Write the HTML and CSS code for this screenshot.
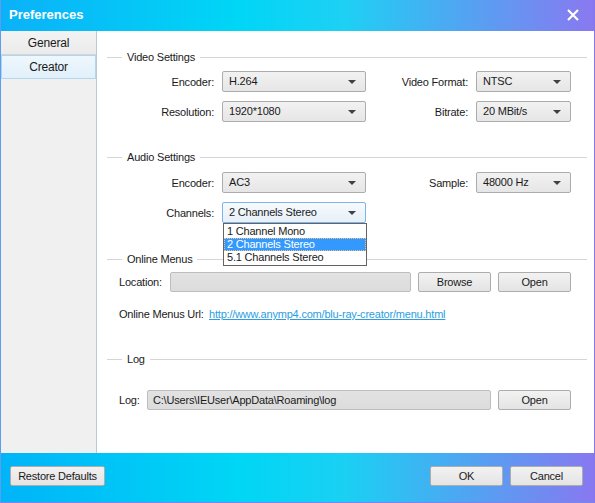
FILE: index.html
```html
<!DOCTYPE html>
<html lang="en">
<head>
    <meta charset="UTF-8">
    <title>Preferences</title>
    <link rel="stylesheet" href="styles.css">
</head>
<body>
    <div class="window">
        <div class="titlebar">
            <span class="title">Preferences</span>
            <svg class="close" width="12" height="12" viewBox="0 0 12 12">
                <path d="M1 1 L11 11 M11 1 L1 11" stroke="#ffffff" stroke-width="2.2" fill="none"/>
            </svg>
        </div>

        <div class="main">
            <div class="sidebar">
                <div class="tab">General</div>
                <div class="tab active">Creator</div>
            </div>

            <div class="content">
                <!-- Video -->
                <div class="group-title"><span>Video Settings</span></div>
                <div class="form-grid">
                    <label>Encoder:</label>
                    <div class="select">H.264</div>
                    <label>Video Format:</label>
                    <div class="select">NTSC</div>

                    <label>Resolution:</label>
                    <div class="select">1920*1080</div>
                    <label>Bitrate:</label>
                    <div class="select">20 MBit/s</div>
                </div>

                <!-- Audio -->
                <div class="group-title audio"><span>Audio Settings</span></div>
                <div class="form-grid">
                    <label>Encoder:</label>
                    <div class="select">AC3</div>
                    <label>Sample:</label>
                    <div class="select">48000 Hz</div>

                    <label>Channels:</label>
                    <div class="select focused">2 Channels Stereo
                        <ul class="dropdown">
                            <li>1 Channel Mono</li>
                            <li class="selected">2 Channels Stereo</li>
                            <li>5.1 Channels Stereo</li>
                        </ul>
                    </div>
                </div>

                <!-- Online menus -->
                <div class="group-title online"><span>Online Menus</span></div>
                <div class="row">
                    <label class="w-location">Location:</label>
                    <div class="input location"></div>
                    <button class="btn">Browse</button>
                    <button class="btn">Open</button>
                </div>
                <div class="row url-row">
                    <label class="w-url">Online Menus Url:</label>
                    <a class="link" href="#">http://www.anymp4.com/blu-ray-creator/menu.html</a>
                </div>

                <!-- Log -->
                <div class="group-title log"><span>Log</span></div>
                <div class="row log-row">
                    <label class="w-log">Log:</label>
                    <div class="input path">C:\Users\IEUser\AppData\Roaming\log</div>
                    <button class="btn">Open</button>
                </div>
            </div>
        </div>

        <div class="footer">
            <button class="btn restore">Restore Defaults</button>
            <div class="footer-right">
                <button class="btn">OK</button>
                <button class="btn">Cancel</button>
            </div>
        </div>
    </div>
</body>
</html>
```

FILE: styles.css
```css
body {
    margin: 0;
    font-family: "Liberation Sans", Arial, sans-serif;
    font-size: 11px;
    letter-spacing: -0.2px;
    color: #1a1a1a;
    background: #ffffff;
}
.window {
    width: 595px;
    height: 503px;
    box-sizing: border-box;
    display: flex;
    flex-direction: column;
    border-left: 1px solid #5d9cf0;
    border-right: 1px solid #8676ee;
    border-bottom: 1px solid #7a86ee;
    overflow: hidden;
}
.titlebar {
    height: 31px;
    flex: none;
    display: flex;
    align-items: center;
    justify-content: space-between;
    padding: 0 16px 0 9px;
    margin: 0 -1px;
    background: linear-gradient(90deg, #0bb1f8 0%, #00d6f6 40%, #1ed0f4 58%, #52a4f2 78%, #8a78f0 100%);
}
.title {
    color: #ffffff;
    font-weight: bold;
    font-size: 13px;
    letter-spacing: 0;
    margin-top: -2px;
}
.close {
    margin-top: -2px;
}
.main {
    flex: 1;
    display: flex;
    min-height: 0;
}
.sidebar {
    width: 95px;
    flex: none;
    background: #f0f0f0;
    border-right: 1px solid #bfc6d4;
}
.tab {
    height: 23px;
    line-height: 24px;
    text-align: center;
    font-size: 12px;
    border-bottom: 1px solid #d6d6d6;
    background: linear-gradient(#f3f3f3, #ebebeb);
}
.tab.active {
    background: linear-gradient(#eef7fd, #e1f0fa);
    border: 1px solid #b3d6ef;
    height: 22px;
    line-height: 23px;
}
.content {
    flex: 1;
    background: #ffffff;
    padding: 19px 7px 0 10px;
    position: relative;
}
.group-title {
    display: flex;
    align-items: center;
    height: 14px;
    font-size: 11px;
}
.group-title::before {
    content: "";
    width: 15px;
    border-top: 1px solid #d5d5d5;
}
.group-title::after {
    content: "";
    flex: 1;
    border-top: 1px solid #d5d5d5;
}
.group-title span {
    padding: 0 5px;
}
.group-title.audio {
    margin-top: 28px;
}
.group-title.online {
    margin-top: 29px;
}
.group-title.log {
    margin-top: 31px;
}
.form-grid {
    display: grid;
    grid-template-columns: 115px 144px 110px 95px;
    grid-auto-rows: 21px;
    row-gap: 9px;
    margin-top: 7px;
    align-items: center;
}
.form-grid label {
    text-align: right;
    padding-right: 8px;
}
.audio + .form-grid {
    margin-top: 8px;
}
.select {
    position: relative;
    height: 21px;
    box-sizing: border-box;
    border: 1px solid #acacac;
    border-radius: 2px;
    background: linear-gradient(#f2f2f2, #e6e6e6);
    padding-left: 6px;
    line-height: 19px;
}
.select::after {
    content: "";
    position: absolute;
    right: 9px;
    top: 8px;
    border-left: 4px solid transparent;
    border-right: 4px solid transparent;
    border-top: 4px solid #404040;
}
.select.focused {
    border-color: #7eb4ea;
    background: linear-gradient(#f6fafd, #e6f0f9);
}
.dropdown {
    position: absolute;
    top: 20px;
    left: 0;
    width: 144px;
    box-sizing: border-box;
    margin: 0;
    padding: 1px 0;
    list-style: none;
    background: #ffffff;
    border: 1px solid #646464;
    z-index: 2;
}
.dropdown li {
    height: 13px;
    line-height: 13px;
    padding-left: 3px;
}
.dropdown li.selected {
    background: #3399ff;
    color: #ffffff;
    outline: 1px dotted #f0c080;
    outline-offset: -1px;
}
.row {
    display: flex;
    align-items: center;
    gap: 7px;
    padding-left: 12px;
    height: 20px;
    margin-top: 6px;
}
.row label {
    flex: none;
    white-space: nowrap;
}
.w-location {
    width: 44px;
}
.w-url {
    width: 83px;
}
.w-log {
    width: 21px;
}
.input {
    height: 20px;
    box-sizing: border-box;
    border: 1px solid #bdbdbd;
    border-radius: 2px;
    background: linear-gradient(#e2e2e2, #dcdcdc);
    padding-left: 5px;
    line-height: 18px;
}
.input.location {
    width: 241px;
}
.input.path {
    width: 344px;
}
.url-row {
    margin-top: 15px;
    height: 14px;
}
.link {
    color: #2a9ee0;
    text-decoration: underline;
}
.log-row {
    margin-top: 24px;
}
.btn {
    width: 73px;
    height: 20px;
    box-sizing: border-box;
    border: 1px solid #adadad;
    border-radius: 2px;
    background: linear-gradient(#f2f2f2, #e4e4e4);
    font-family: inherit;
    font-size: 11px;
    letter-spacing: inherit;
    color: #1a1a1a;
    padding: 0;
}
.footer {
    height: 49px;
    flex: none;
    box-sizing: border-box;
    display: flex;
    align-items: center;
    justify-content: space-between;
    padding: 0 11px 3px 9px;
    background: linear-gradient(90deg, #00b4f8 0%, #00d6f5 40%, #1ad0f3 58%, #4ea6f2 78%, #8878f0 100%);
}
.footer .btn.restore {
    width: 95px;
}
.footer-right {
    display: flex;
    gap: 7px;
}
```
